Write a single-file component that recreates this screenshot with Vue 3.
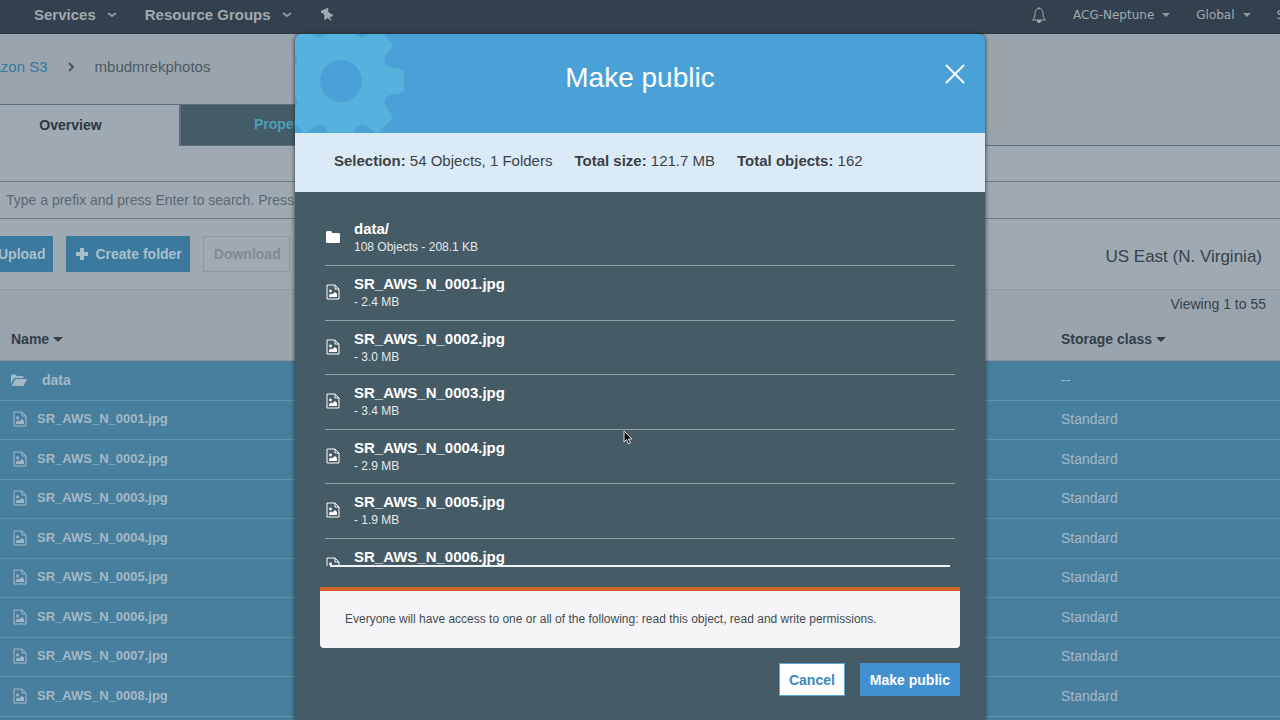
<script setup>
const pad = (n) => `SR_AWS_N_${String(n).padStart(4, '0')}.jpg`
const rows = [
  { name: 'data', folder: true, storage: '--' },
  ...Array.from({ length: 9 }, (_, i) => ({ name: pad(i + 1), storage: 'Standard' })),
]
const selected = [
  { name: 'data/', folder: true, detail: '108 Objects - 208.1 KB' },
  { name: pad(1), detail: '- 2.4 MB' },
  { name: pad(2), detail: '- 3.0 MB' },
  { name: pad(3), detail: '- 3.4 MB' },
  { name: pad(4), detail: '- 2.9 MB' },
  { name: pad(5), detail: '- 1.9 MB' },
  { name: pad(6), detail: '' },
]
const teeth = [0, 45, 90, 135, 180, 225, 270, 315]
</script>

<template>
  <div class="console">
    <header class="topbar">
      <nav class="menu">
        <button type="button">Services
          <svg class="chev" viewBox="0 0 10 6"><path d="M1 1l4 3 4-3" /></svg>
        </button>
        <button type="button">Resource Groups
          <svg class="chev" viewBox="0 0 10 6"><path d="M1 1l4 3 4-3" /></svg>
        </button>
        <button type="button" aria-label="Pin shortcuts">
          <svg class="pin" viewBox="0 0 14 14"><path d="M4 1.500L7.500 0L8.500 1L8 3.500L11 6L13 6.500L12.500 8.500L9.500 9L12 13.500L7.500 10L5 12L4 11L4.500 8L3 5L1 5L1 3Z" /></svg>
        </button>
      </nav>
      <nav class="account">
        <button type="button" aria-label="Alerts">
          <svg class="bell" viewBox="0 0 16 18"><path d="M8 2.500C5 2.500 4 5 4 7.500C4 11 3 12.500 1.500 14H14.500C13 12.500 12 11 12 7.500C12 5 11 2.500 8 2.500ZM8 1V2.500" /><path class="clapper" d="M6 14.500H10L9 16.500H7Z" /></svg>
        </button>
        <button type="button">ACG-Neptune <svg class="caret" viewBox="0 0 8 4"><path d="M0 0H8L4 4Z" /></svg></button>
        <button type="button">Global <svg class="caret" viewBox="0 0 8 4"><path d="M0 0H8L4 4Z" /></svg></button>
        <button type="button">Support</button>
      </nav>
    </header>

    <main class="page">
      <nav class="crumbs">
        <a href="#">Amazon S3</a>
        <svg viewBox="0 0 6 10"><path d="M1 1l4 4-4 4" /></svg>
        <span>mbudmrekphotos</span>
      </nav>
      <div class="tabs">
        <button type="button" class="tab on">Overview</button>
        <button type="button" class="tab">Properties</button>
      </div>
      <input class="search" type="text" aria-label="Search by prefix" placeholder="Type a prefix and press Enter to search. Press ESC to clear." />
      <div class="actions">
        <button type="button" class="act">
          <svg viewBox="0 0 12 12"><path d="M6 0l5 5H8v7H4V5H1z" /></svg>Upload
        </button>
        <button type="button" class="act">
          <svg viewBox="0 0 12 12"><path d="M4 0h4v4h4v4H8v4H4V8H0V4h4z" /></svg>Create folder
        </button>
        <button type="button" class="act off" disabled>Download</button>
        <span class="region">US East (N. Virginia)</span>
      </div>
      <div class="paging">Viewing 1 to 55</div>
      <table>
        <thead>
          <tr>
            <th>Name <svg class="sort" viewBox="0 0 10 5"><path d="M0 0H10L5 5Z" /></svg></th>
            <th class="storage">Storage class <svg class="sort" viewBox="0 0 10 5"><path d="M0 0H10L5 5Z" /></svg></th>
          </tr>
        </thead>
        <tbody>
          <tr v-for="r in rows" :key="r.name">
            <td>
              <div class="name" :class="{ folder: r.folder }">
                <svg v-if="r.folder" class="open" viewBox="0 0 16 12"><path d="M0 10V1.500Q0 0.500 1 0.500H4.500L6 2H11.500Q12.500 2 12.500 3V4H4.500Q3.300 4 2.700 5Z" /><path d="M4.500 5H16L13 11Q12.600 12 11.500 12H0.600Z" /></svg>
                <svg v-else class="file" viewBox="0 0 14 16"><path class="sheet" d="M1 1H9L13 5V15H1ZM9 1V5H13" /><path class="fill" d="M3 13V11L5 9.500L6 10.500L9 8L11 10V13Z" /><circle class="fill" cx="4.500" cy="7" r="1.400" /></svg>
                {{ r.name }}
              </div>
            </td>
            <td class="storage">{{ r.storage }}</td>
          </tr>
        </tbody>
      </table>
    </main>

    <div class="overlay">
      <section class="modal" role="dialog" aria-labelledby="title">
        <header class="head">
          <svg class="gear" viewBox="-63 -63 126 126">
            <circle r="48" />
            <path v-for="a in teeth" :key="a" :transform="`rotate(${a})`" d="M42 -18L49 -14L61 -12L63 -10V10L61 12L49 14L42 18Z" />
            <circle class="hole" r="21" />
          </svg>
          <h1 id="title">Make public</h1>
          <button type="button" class="close" aria-label="Close">
            <svg viewBox="0 0 20 20"><path d="M1 1L19 19M19 1L1 19" /></svg>
          </button>
        </header>
        <div class="summary">
          <span><b>Selection:</b> 54 Objects, 1 Folders</span>
          <span><b>Total size:</b> 121.7 MB</span>
          <span><b>Total objects:</b> 162</span>
        </div>
        <div class="body">
          <ul class="list">
            <li v-for="s in selected" :key="s.name">
              <svg v-if="s.folder" class="closed" viewBox="0 0 14 12"><path d="M0 1.500Q0 0 1.500 0H4.500Q6 0 6 1.500V2H12.500Q14 2 14 3.500V10.500Q14 12 12.500 12H1.500Q0 12 0 10.500Z" /></svg>
              <svg v-else class="file" viewBox="0 0 14 16"><path class="sheet" d="M1 1H9L13 5V15H1ZM9 1V5H13" /><path class="fill" d="M3 13V11L5 9.500L6 10.500L9 8L11 10V13Z" /><circle class="fill" cx="4.500" cy="7" r="1.400" /></svg>
              <div>
                <div class="title">{{ s.name }}</div>
                <div class="detail">{{ s.detail }}</div>
              </div>
            </li>
          </ul>
          <div class="rule"></div>
          <p class="notice">Everyone will have access to one or all of the following: read this object, read and write permissions.</p>
          <footer class="foot">
            <button type="button" class="cancel">Cancel</button>
            <button type="button" class="primary">Make public</button>
          </footer>
        </div>
      </section>
    </div>
    <svg class="pointer" viewBox="0 0 10 15"><path d="M1 1V12L3.500 9.500L5.500 14L7.500 13L5.500 9H9Z" /></svg>
  </div>
</template>

<style>
body { background: #9fa9b1; }
</style>

<style scoped>
* { box-sizing: border-box; }
.console { position: relative; height: 100vh; overflow: hidden; font: 14px/20px "Liberation Sans", Arial, sans-serif; color: #36424b; background: #9fa9b1; }
button { font: inherit; color: inherit; border: 0; padding: 0; background: none; white-space: nowrap; }
svg { flex: none; }

.topbar { display: flex; justify-content: space-between; height: 34px; padding: 0 0 4px 34px; background: #33414e; border-bottom: 1px solid #2b3843; color: #a0a9b0; overflow: hidden; }
.menu, .account { display: flex; align-items: center; }
.menu { gap: 28px; font-size: 15px; font-weight: bold; }
.menu button, .account button { display: flex; align-items: center; }
.chev { width: 10px; height: 6px; margin-left: 11px; fill: none; stroke: #8d98a1; stroke-width: 2; }
.pin { width: 14px; height: 14px; fill: #a0a9b0; }
.account { gap: 26px; margin-right: -44px; font: 12px/20px "DejaVu Sans", Verdana, sans-serif; }
.bell { width: 16px; height: 18px; fill: none; stroke: #a0a9b0; stroke-width: 1; }
.clapper { fill: #a0a9b0; }
.caret { width: 8px; height: 4px; margin-left: 8px; fill: #8d98a1; }

/* The page is scrolled sideways under the window's left edge. */
.page { margin-left: -43px; }
.crumbs { display: flex; align-items: center; height: 70px; padding: 0 0 4px 13px; font-size: 15px; background: #9aa4ac; color: #4d5a63; }
.crumbs a { color: #347a9f; text-decoration: none; }
.crumbs svg { width: 6px; height: 10px; margin: 0 21px 0 20px; fill: none; stroke: #4d5a63; stroke-width: 2; }
.tabs { display: flex; height: 42px; background: #9aa4ac; border-bottom: 1px solid #5d6f7c; }
.tab { width: 222px; height: 42px; padding: 0 4px 2px 0; font-weight: bold; color: #4f9bb5; background: #445c67; border: 1px solid #5d6f7c; border-left-width: 2px; }
.tab.on { padding: 0 0 2px 5px; color: #2c3840; background: #9fa9b1; border-width: 1px 0 0; }
.search { display: block; width: 100%; height: 38px; margin-top: 35px; padding: 0 49px; border: solid #6d7982; border-width: 1px 0; border-radius: 0; background: #9fa9b1; font: 14px/20px "Liberation Sans", Arial, sans-serif; }
.search::placeholder { color: #5c676f; opacity: 1; }
.actions { display: flex; align-items: center; gap: 13px; height: 70px; padding: 0 18px 0 12px; }
.act { display: flex; align-items: center; gap: 7px; height: 36px; padding: 0 8px 1px 10px; font-weight: bold; color: #a9bfcc; background: #3b7a9e; }
.act svg { width: 12px; height: 12px; fill: #a9bfcc; }
.act.off { color: #7f8b93; background: none; border: 1px solid #8c979f; }
.region { margin-left: auto; padding-top: 6px; font-size: 17px; }
.paging { height: 31px; padding: 4px 14px 0; text-align: right; background: #9aa4ac; border-top: 1px solid #8f9aa2; }
table { width: 100%; border-collapse: separate; border-spacing: 0; table-layout: fixed; }
th { height: 41px; padding: 0 0 2px 54px; text-align: left; background: #9aa4ac; border-bottom: 1px solid #86929b; color: #333f48; }
.sort { width: 10px; height: 5px; margin-bottom: 2px; fill: #333f48; }
td { height: 39px; padding: 0 0 2px 54px; color: #a3b8c5; background: #487f9e; border-bottom: 1px solid #6592ab; }
tr:nth-child(odd) td { height: 40px; }
th.storage, td.storage { width: 219px; padding-left: 0; }
.name { display: flex; align-items: center; gap: 10px; padding-left: 2px; font-size: 13px; font-weight: bold; }
.name.folder { gap: 15px; padding-left: 0; font-size: 14px; }
.file { width: 14px; height: 16px; }
.sheet { fill: none; stroke: #a3b8c5; stroke-width: 1; }
.fill { fill: #a3b8c5; }
.open { width: 16px; height: 12px; fill: #a3b8c5; }

.overlay { position: absolute; inset: 34px 0 0; display: flex; justify-content: center; }
.modal { display: flex; flex-direction: column; width: 100%; max-width: 690px; border-radius: 6px 6px 0 0; overflow: hidden; background: #455b65; box-shadow: 0 0 4px #1f2c35; }
.head { position: relative; display: flex; align-items: center; justify-content: center; height: 99px; padding-bottom: 12px; background: #4aa1d7; overflow: hidden; }
.gear { position: absolute; left: -17px; top: -16px; width: 126px; height: 126px; fill: #55b2dc; }
.hole { fill: #4aa1d7; }
h1 { margin: 0; font-size: 28px; line-height: 36px; font-weight: normal; color: #fff; }
.close { position: absolute; right: 20px; top: 30px; width: 20px; height: 20px; }
.close svg { display: block; width: 20px; height: 20px; fill: none; stroke: #fff; stroke-width: 2; }
.summary { display: flex; gap: 22px; height: 59px; padding: 18px 39px; font-size: 15px; color: #3b4247; background: #dbeaf7; }
.body { flex: 1; padding: 19px 25px 0; }
.list { height: 355px; margin: 0 5px; padding: 0; list-style: none; overflow: hidden; }
li { display: flex; align-items: center; gap: 14px; height: 55px; padding: 0 0 2px 1px; border-bottom: 1px solid #94a1a8; color: #fff; }
li:nth-child(odd) { height: 54px; }
li:first-child { height: 55px; }
li .sheet { stroke: #fff; }
li .fill { fill: #fff; }
.closed { width: 14px; height: 12px; fill: #fff; }
.title { font-size: 15px; line-height: 20px; font-weight: bold; }
.detail { min-height: 16px; font-size: 12px; line-height: 16px; color: #e4e9ec; }
.rule { height: 2px; margin: -1px 10px 0; position: relative; background: #f0f4f6; }
.notice { margin: 20px 0 0; padding: 18px 25px; min-height: 61px; border-top: 4px solid #d2602a; border-radius: 0 0 4px 4px; background: #f5f5f7; font-size: 12px; line-height: 20px; color: #444b50; }
.foot { display: flex; justify-content: flex-end; gap: 15px; margin-top: 15px; }
.foot button { height: 33px; padding: 0 10px; font-weight: bold; }
.foot .cancel { padding: 0 9px; color: #3a8bbd; background: #fff; border: 1px solid #5ba6d1; }
.foot .primary { color: #fff; background: #4390d1; }
.pointer { position: absolute; left: 623px; top: 430px; width: 10px; height: 15px; fill: #111; stroke: #d5dadd; stroke-width: 1; }
</style>
